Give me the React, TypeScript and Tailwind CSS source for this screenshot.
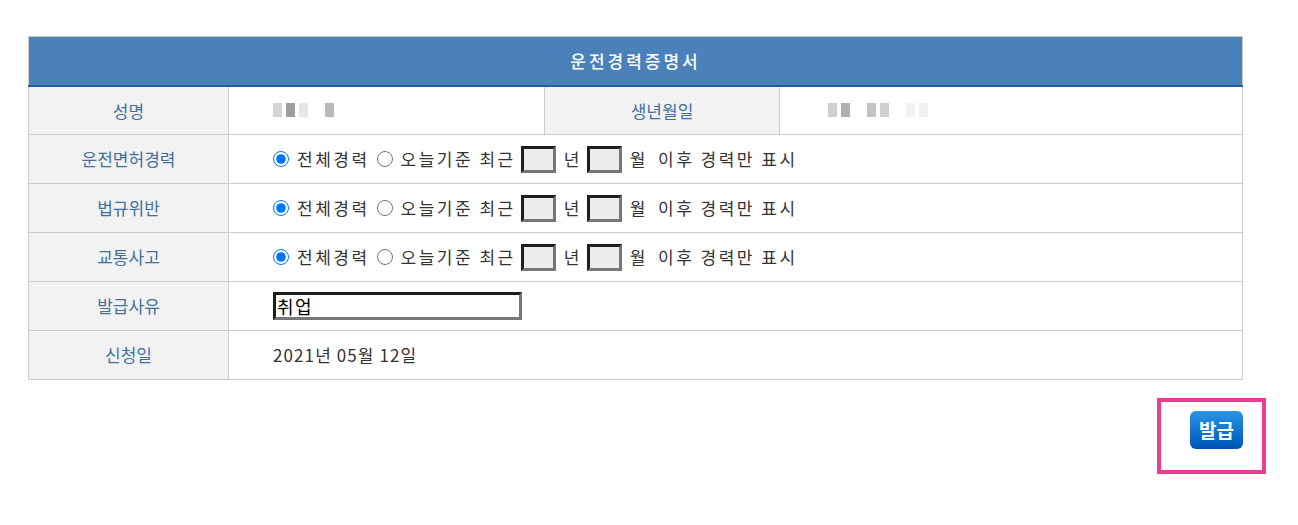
import { useState } from 'react';

type Pick = 'all' | 'recent';

const FONT = "font-['Noto_Sans_CJK_KR','Noto_Sans',sans-serif]";

function Blur({ cells }: { cells: string[] }) {
  // 개인정보 모자이크 흉내
  return (
    <div className="flex items-center gap-[4px] blur-[0.6px]">
      {cells.map((c, i) => (
        <div key={i} className="w-[9px] h-[14px]" style={{ backgroundColor: c }} />
      ))}
    </div>
  );
}

function PeriodRow({ name }: { name: string }) {
  const [pick, setPick] = useState<Pick>('all');
  const box =
    'w-[35px] h-[27px] bg-[#ececec] border-[3px] border-t-[#1e1e1e] border-l-[#1e1e1e] border-b-[#777] border-r-[#777] outline-none';
  return (
    <div className="flex items-center text-[17px] text-[#333] tracking-[2.5px]">
      <input
        type="radio"
        name={name}
        checked={pick === 'all'}
        onChange={() => setPick('all')}
        className="w-[16px] h-[16px] m-0 accent-[#0075ff]"
      />
      <span className="ml-[8px]">전체경력</span>
      <input
        type="radio"
        name={name}
        checked={pick === 'recent'}
        onChange={() => setPick('recent')}
        className="w-[16px] h-[16px] m-0 ml-[7px] accent-[#0075ff]"
      />
      <span className="ml-[8px]">오늘기준 최근</span>
      <input className={`${box} ml-[5px]`} />
      <span className="ml-[8px]">년</span>
      <input className={`${box} ml-[5px]`} />
      <span className="ml-[8px]">월</span>
      <span className="ml-[10px]">이후 경력만 표시</span>
    </div>
  );
}

const th = 'bg-[#f2f2f2] text-[#41709f] font-normal text-[17px] border border-[#cccccc] text-center h-[49px]';
const td = 'border border-[#cccccc] pl-[44px] h-[49px] text-[17px] text-[#333]';

export default function App() {
  return (
    <div className={`${FONT} bg-white min-h-[525px] pt-[36px] pl-[28px]`}>
      <table className="w-[1215px] border-collapse table-fixed">
        <colgroup>
          <col className="w-[200px]" />
          <col className="w-[316px]" />
          <col className="w-[235px]" />
          <col />
        </colgroup>
        <thead>
          <tr>
            <th
              colSpan={4}
              className="h-[49px] bg-[#4b81ba] text-white text-[17px] font-medium tracking-[3px] border border-[#cccccc] border-b-[#1f5f9f] border-b-2"
            >
              운전경력증명서
            </th>
          </tr>
        </thead>
        <tbody>
          <tr>
            <th className={th}>성명</th>
            <td className={`${td} pl-[26px]`}>
              <Blur cells={['#d4d4d4', '#9e9e9e', '#e6e6e6', '#ffffff', '#b9b9b9']} />
            </td>
            <th className={th}>생년월일</th>
            <td className={`${td} pl-[48px]`}>
              <Blur cells={['#cfcfcf', '#b0b0b0', '#ffffff', '#c4c4c4', '#d0d0d0', '#ffffff', '#f2f2f2', '#f0f0f0']} />
            </td>
          </tr>
          <tr>
            <th className={th}>운전면허경력</th>
            <td className={td} colSpan={3}>
              <PeriodRow name="license" />
            </td>
          </tr>
          <tr>
            <th className={th}>법규위반</th>
            <td className={td} colSpan={3}>
              <PeriodRow name="violation" />
            </td>
          </tr>
          <tr>
            <th className={th}>교통사고</th>
            <td className={td} colSpan={3}>
              <PeriodRow name="accident" />
            </td>
          </tr>
          <tr>
            <th className={th}>발급사유</th>
            <td className={td} colSpan={3}>
              <input
                defaultValue="취업"
                className="block w-[249px] h-[28px] px-[1px] text-[18px] tracking-[1.5px] text-black bg-white border-[3px] border-t-[#1e1e1e] border-l-[#1e1e1e] border-b-[#777] border-r-[#777] outline-none"
              />
            </td>
          </tr>
          <tr>
            <th className={th}>신청일</th>
            <td className={`${td} tracking-[1.1px]`} colSpan={3}>
              2021년 05월 12일
            </td>
          </tr>
        </tbody>
      </table>

      <div className="w-[1215px] flex justify-end mt-[18px]">
        <div className="mr-[-23px] border-4 border-[#ea3c93] pt-[9px] pb-[21px] pl-[29px] pr-[19px]">
          <button className="w-[53px] h-[38px] rounded-[6px] bg-gradient-to-b from-[#2a97e8] to-[#0053b5] text-white text-[19px] font-bold">
            발급
          </button>
        </div>
      </div>
    </div>
  );
}
